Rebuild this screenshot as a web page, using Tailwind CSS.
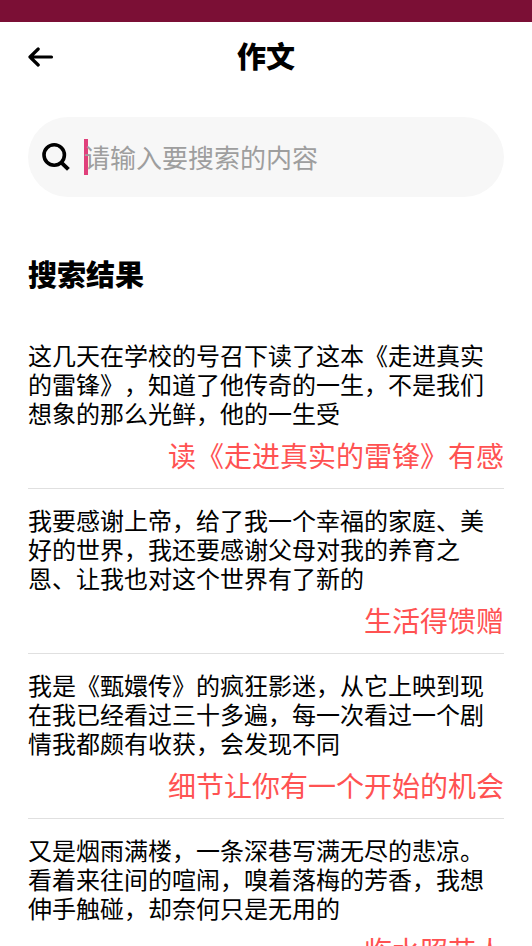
<!DOCTYPE html>
<html lang="zh-CN">
<head>
  <meta charset="UTF-8" />
  <meta name="viewport" content="width=device-width, initial-scale=1" />
  <title>作文</title>
  <script src="https://cdn.jsdelivr.net/npm/@tailwindcss/browser@4"></script>
</head>
<body class="flex h-screen flex-col overflow-hidden bg-white font-['Noto_Sans_CJK_SC',sans-serif] text-black [text-spacing-trim:space-all]">
  <!-- status bar -->
  <div class="h-[22px] shrink-0 bg-[#7b0f35]"></div>

  <header class="grid h-[70px] shrink-0 grid-cols-[1fr_auto_1fr] items-center px-7">
    <button type="button" aria-label="返回" class="justify-self-start">
      <svg class="block h-5 w-[26px]" viewBox="0 0 26 20" fill="none" stroke="currentColor" stroke-width="3.2" stroke-linecap="round" stroke-linejoin="round">
        <path d="M23.5 10H2M10.2 2L2 10L10.2 18" />
      </svg>
    </button>
    <h1 class="pb-1 text-[29px] leading-9 font-black">作文</h1>
  </header>

  <main class="min-h-0 flex-1 overflow-y-auto px-7 pt-[25px] [scrollbar-width:none]">
    <form class="flex h-20 items-center rounded-full bg-[#f7f7f7] pr-7 pl-[14px]">
      <label for="keyword" class="mr-[14px] shrink-0">
        <svg role="img" aria-label="搜索" class="block size-7" viewBox="0 0 28 28" fill="none" stroke="currentColor" stroke-width="3.6">
          <circle cx="12.2" cy="12" r="10.2" />
          <path d="M19.4 19.6L26.4 26.4" stroke-width="4" />
        </svg>
      </label>
      <div class="relative flex-1">
        <!-- caret -->
        <span class="absolute top-0 left-0 h-9 w-1 bg-[#e0407b]"></span>
        <input id="keyword" type="text" placeholder="请输入要搜索的内容" class="relative block h-9 w-full text-[26px] leading-9 outline-none placeholder:text-[#9e9e9e]" />
      </div>
    </form>

    <h2 class="mt-[58px] text-[29px] leading-9 font-black">搜索结果</h2>

    <ul class="mt-[33px]">
      <li class="border-b border-[#e0e0e0] py-4">
        <p class="text-[24px] leading-[29px]">这几天在学校的号召下读了这本《走进真实的雷锋》，知道了他传奇的一生，不是我们想象的那么光鲜，他的一生受</p>
        <a href="#" class="mt-[11px] block text-right text-[28px] leading-[34px] text-[#ff5252]">读《走进真实的雷锋》有感</a>
      </li>
      <li class="border-b border-[#e0e0e0] py-4">
        <p class="text-[24px] leading-[29px]">我要感谢上帝，给了我一个幸福的家庭、美好的世界，我还要感谢父母对我的养育之恩、让我也对这个世界有了新的</p>
        <a href="#" class="mt-[11px] block text-right text-[28px] leading-[34px] text-[#ff5252]">生活得馈赠</a>
      </li>
      <li class="border-b border-[#e0e0e0] py-4">
        <p class="text-[24px] leading-[29px]">我是《甄嬛传》的疯狂影迷，从它上映到现在我已经看过三十多遍，每一次看过一个剧情我都颇有收获，会发现不同</p>
        <a href="#" class="mt-[11px] block text-right text-[28px] leading-[34px] text-[#ff5252]">细节让你有一个开始的机会</a>
      </li>
      <li class="border-b border-[#e0e0e0] py-4">
        <p class="text-[24px] leading-[29px]">又是烟雨满楼，一条深巷写满无尽的悲凉。看着来往间的喧闹，嗅着落梅的芳香，我想伸手触碰，却奈何只是无用的</p>
        <a href="#" class="mt-[11px] block text-right text-[28px] leading-[34px] text-[#ff5252]">临水照花人</a>
      </li>
    </ul>
  </main>
</body>
</html>
